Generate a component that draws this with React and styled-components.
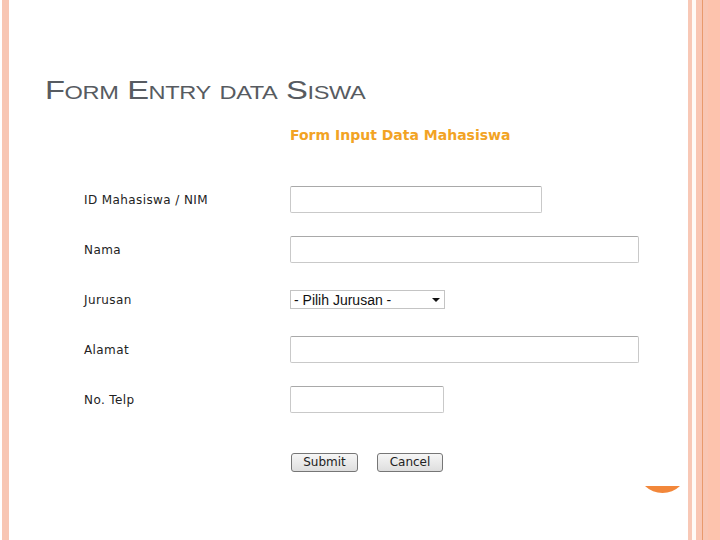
import React from "react";
import styled, { createGlobalStyle } from "styled-components";

const GlobalStyle = createGlobalStyle`
    html, body {
        margin: 0;
        padding: 0;
        background: #ffffff;
    }
`;

const Slide = styled.div`
    position: relative;
    display: flex;
    width: 720px;
    height: 540px;
    overflow: hidden;
    background: #ffffff;
`;

const LeftRail = styled.div`
    width: 7px;
    margin-left: 2px;
    background: #f8c6b3;
`;

const RightRail = styled.div`
    width: 32px;
    background: linear-gradient(
        to right,
        #f8c8b6 0px, #f8c8b6 4px,
        #fffaf6 4px, #fffaf6 8px,
        #f9c6b3 8px, #f9c6b3 14px,
        #e99a6c 14px, #e99a6c 15px,
        #f9c6b3 15px, #f9c6b3 20px,
        #fdc3ad 20px, #fdc3ad 32px
    );
`;

const Main = styled.div`
    position: relative;
    flex: 1;
    display: flex;
    flex-direction: column;
`;

const Title = styled.h1`
    margin: 74px 0 0 36px;
    font-family: "Liberation Sans", Arial, sans-serif;
    font-size: 25px;
    line-height: 32px;
    font-weight: normal;
    font-variant: small-caps;
    letter-spacing: -0.3px;
    color: #575b61;
    transform: scaleX(1.31);
    transform-origin: left center;
`;

const Form = styled.form`
    display: grid;
    grid-template-columns: 206px 1fr;
    grid-auto-rows: 50px;
    align-items: center;
    margin: 18px 0 0 75px;
    font-family: "DejaVu Sans", Verdana, sans-serif;
`;

const FormTitle = styled.div`
    grid-column: 2;
    align-self: start;
    height: 22px;
    line-height: 22px;
    font-size: 14px;
    font-weight: bold;
    color: #f2a324;
`;

const Label = styled.label`
    grid-column: 1;
    padding-top: 2px;
    font-size: 12px;
    letter-spacing: 0.4px;
    color: #222;
`;

const TextInput = styled.input`
    box-sizing: border-box;
    width: ${(p) => p.$w}px;
    height: 27px;
    margin: 0;
    border: 1px solid #c9c9c9;
    border-top-color: #a9a9a9;
    border-radius: 2px;
    background: #fff;
`;

const SelectWrap = styled.div`
    position: relative;
    width: 155px;
    height: 19px;
`;

const Select = styled.select`
    box-sizing: border-box;
    width: 100%;
    height: 100%;
    margin: 0;
    padding: 0 0 0 3px;
    appearance: none;
    border: 1px solid #c4c4c4;
    border-radius: 0;
    background: #fff;
    font-family: "Liberation Sans", Arial, sans-serif;
    font-size: 14px;
    color: #111;
`;

const Caret = styled.span`
    position: absolute;
    right: 5px;
    top: 8px;
    width: 0;
    height: 0;
    border-left: 4px solid transparent;
    border-right: 4px solid transparent;
    border-top: 4px solid #111;
    pointer-events: none;
`;

const Actions = styled.div`
    grid-column: 2;
    align-self: start;
    display: flex;
    gap: 19px;
    margin: 29px 0 0 1px;
`;

const Button = styled.button`
    box-sizing: border-box;
    width: ${(p) => p.$w}px;
    height: 19px;
    padding: 0;
    border: 1px solid #767676;
    border-radius: 3px;
    background: linear-gradient(#f6f6f6, #dedede);
    font-family: "DejaVu Sans", Verdana, sans-serif;
    font-size: 12px;
    line-height: 17px;
    color: #222;
`;

const Accent = styled.svg`
    position: absolute;
    right: 8px;
    top: 486px;
    display: block;
`;

const fields = [
    { label: "ID Mahasiswa / NIM", width: 252 },
    { label: "Nama", width: 349 },
    { label: "Jurusan", select: true },
    { label: "Alamat", width: 349 },
    { label: "No. Telp", width: 154 },
];

export default function App() {
    return (
        <>
            <GlobalStyle />
            <Slide>
                <LeftRail />
                <Main>
                    <Title>Form Entry data Siswa</Title>
                    <Form onSubmit={(e) => e.preventDefault()}>
                        <FormTitle>Form Input Data Mahasiswa</FormTitle>
                        {fields.map((f) => (
                            <React.Fragment key={f.label}>
                                <Label>{f.label}</Label>
                                {f.select ? (
                                    <SelectWrap>
                                        <Select defaultValue="">
                                            <option value="">- Pilih Jurusan -</option>
                                        </Select>
                                        <Caret />
                                    </SelectWrap>
                                ) : (
                                    <TextInput type="text" $w={f.width} />
                                )}
                            </React.Fragment>
                        ))}
                        <Actions>
                            <Button type="submit" $w={67}>Submit</Button>
                            <Button type="button" $w={66}>Cancel</Button>
                        </Actions>
                    </Form>
                    <Accent width="35" height="7" viewBox="0 0 35 7">
                        <path d="M0 0 A25.4 25.4 0 0 0 35 0 Z" fill="#f2873a" />
                    </Accent>
                </Main>
                <RightRail />
            </Slide>
        </>
    );
}
